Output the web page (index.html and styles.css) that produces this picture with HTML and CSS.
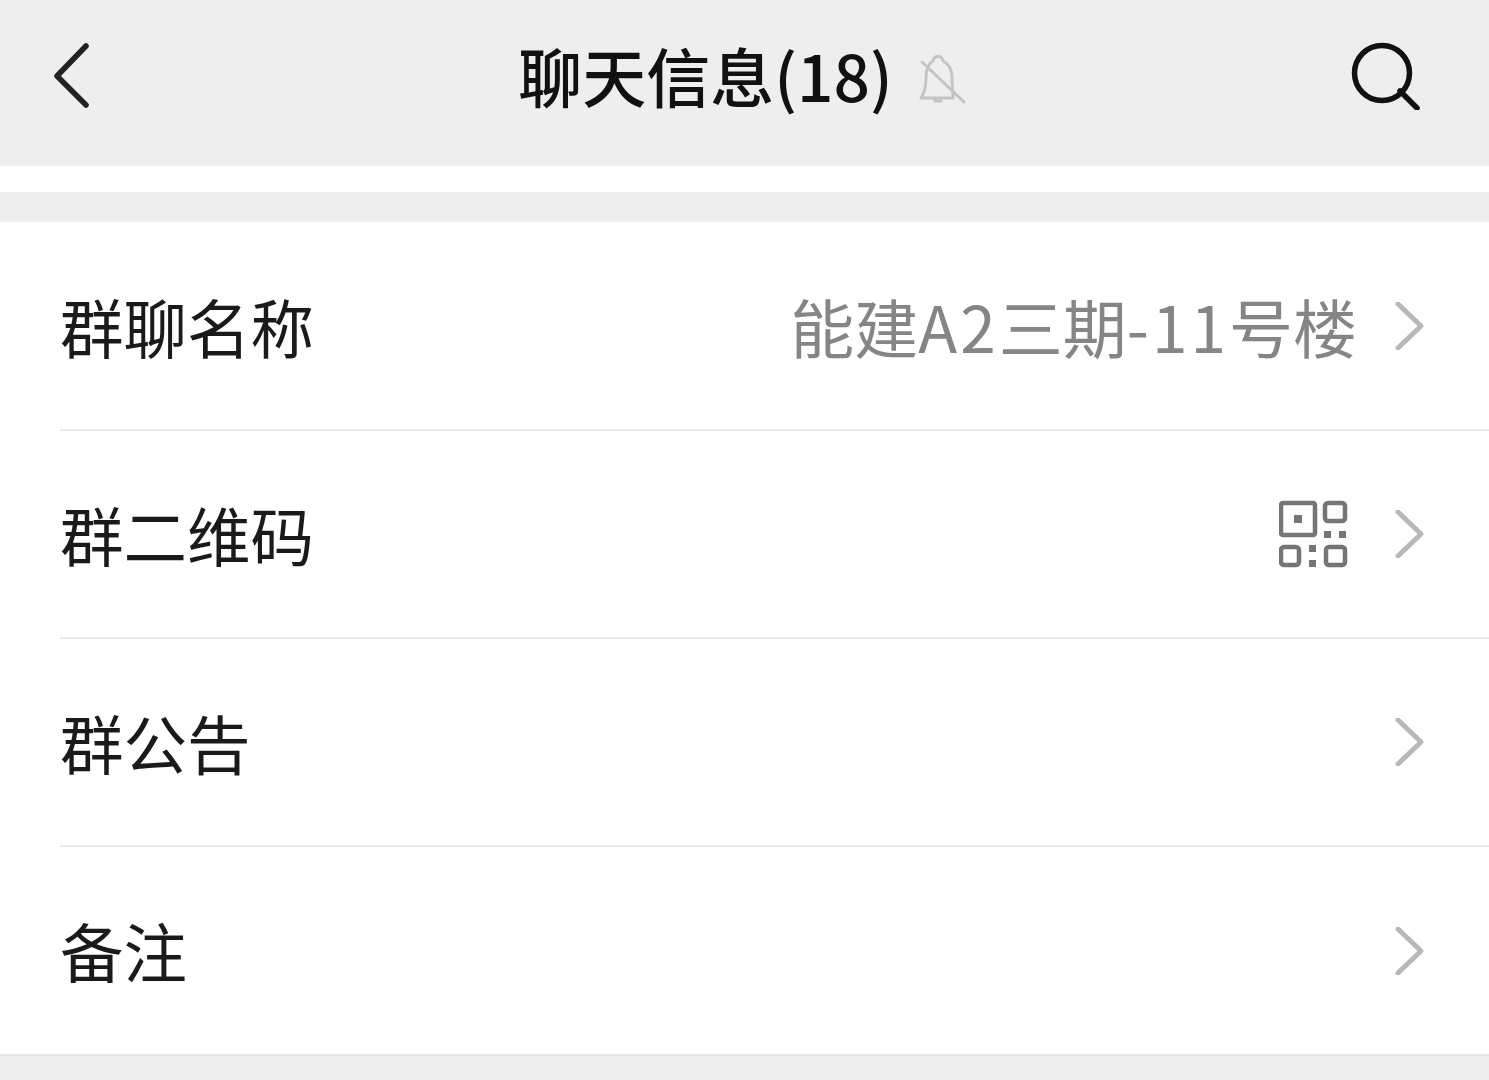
FILE: index.html
```html
<!DOCTYPE html>
<html lang="zh-CN">
<head>
  <meta charset="UTF-8">
  <meta name="viewport" content="width=device-width, initial-scale=1.0">
  <title>聊天信息</title>
  <link rel="stylesheet" href="styles.css">
</head>
<body>
  <header class="topbar">
    <svg class="back-icon" width="40" height="66" viewBox="0 0 40 66">
      <path d="M34 4 L5 34 L34 63" />
    </svg>
    <div class="topbar-title">
      <h1>聊天信息(18)</h1>
      <svg class="mute-icon" width="48" height="52" viewBox="0 0 48 52">
        <path d="M14 7 C15 1 23 1 24 7 C30 10 33 15 33 24 L34 44 L2 44 C6 38 7 32 7 24 C7 15 9 10 14 7 Z" />
        <path d="M16 44 L16 47 L22 47 L22 44" />
        <path d="M3 8 L45 48" />
      </svg>
    </div>
    <svg class="search-icon" width="70" height="70" viewBox="0 0 70 70">
      <circle cx="31" cy="33" r="27.5" />
      <path d="M49 51 L66 68" />
    </svg>
  </header>

  <div class="white-strip"></div>
  <div class="grey-strip"></div>

  <section class="list">
    <div class="row">
      <span class="row-label">群聊名称</span>
      <span class="row-value">能建<span class="latin">A2</span>三期<span class="latin">-11</span>号楼</span>
      <svg class="chevron" width="30" height="48" viewBox="0 0 30 48"><path d="M3 2 L26 24 L3 46" /></svg>
    </div>
    <div class="row">
      <span class="row-label">群二维码</span>
      <svg class="qr-icon" width="70" height="70" viewBox="0 0 70 70">
        <rect class="qr-box" x="2" y="4" width="34" height="32" rx="2" />
        <rect class="qr-dot" x="15" y="16" width="8" height="8" />
        <rect class="qr-box" x="46" y="4" width="20" height="18" rx="3" />
        <rect class="qr-box" x="2" y="48" width="18" height="18" rx="3" />
        <rect class="qr-box" x="47" y="48" width="19" height="18" rx="3" />
        <rect class="qr-dot" x="45" y="32" width="7" height="7" />
        <rect class="qr-dot" x="60" y="32" width="7" height="7" />
        <rect class="qr-dot" x="30" y="46" width="7" height="7" />
        <rect class="qr-dot" x="30" y="61" width="7" height="7" />
      </svg>
      <svg class="chevron" width="30" height="48" viewBox="0 0 30 48"><path d="M3 2 L26 24 L3 46" /></svg>
    </div>
    <div class="row">
      <span class="row-label">群公告</span>
      <svg class="chevron" width="30" height="48" viewBox="0 0 30 48"><path d="M3 2 L26 24 L3 46" /></svg>
    </div>
    <div class="row">
      <span class="row-label">备注</span>
      <svg class="chevron" width="30" height="48" viewBox="0 0 30 48"><path d="M3 2 L26 24 L3 46" /></svg>
    </div>
  </section>

  <div class="bottom-strip"></div>
</body>
</html>
```

FILE: styles.css
```css
html, body {
  margin: 0;
  padding: 0;
}
body {
  font-family: "Noto Sans CJK SC", "Noto Sans", sans-serif;
  background-color: #fff;
  color: #1a1a1a;
  height: 1080px;
  overflow: hidden;
}
svg {
  display: block;
  flex-shrink: 0;
  fill: none;
}
.topbar {
  height: 166px;
  box-sizing: border-box;
  padding: 0 68px 16px 52px;
  background-color: #eeeeee;
  display: flex;
  align-items: center;
  justify-content: space-between;
}
.topbar-title {
  display: flex;
  align-items: center;
  gap: 26px;
  margin-left: 42px;
}
.topbar-title h1 {
  margin: 0 0 2px;
  font-size: 64px;
  font-weight: 500;
  line-height: 90px;
  color: #111;
}
.back-icon path {
  stroke: #222;
  stroke-width: 5.5;
  stroke-linecap: round;
  stroke-linejoin: round;
}
.mute-icon {
  margin-top: 10px;
}
.mute-icon path {
  stroke: #c4c4c4;
  stroke-width: 3;
  stroke-linecap: round;
  stroke-linejoin: round;
}
.search-icon circle, .search-icon path {
  stroke: #111;
  stroke-width: 5.5;
  stroke-linecap: round;
}
.white-strip {
  height: 26px;
}
.grey-strip {
  height: 30px;
  background-color: #eeeeee;
}
.list {
  padding: 1px 0 0 60px;
}
.row {
  height: 208px;
  box-sizing: border-box;
  padding-right: 64px;
  border-bottom: 2px solid #e9e9e9;
  display: flex;
  align-items: center;
}
.row:last-child {
  height: 207px;
  border-bottom: none;
}
.row-label {
  font-size: 63.5px;
  line-height: 90px;
  color: #1a1a1a;
  margin-right: auto;
  padding-bottom: 3px;
}
.row-value {
  font-size: 64px;
  line-height: 90px;
  color: #858585;
  margin-right: 38px;
  padding-bottom: 3px;
}
.latin {
  letter-spacing: 3px;
}
.chevron path {
  stroke: #b8b8b8;
  stroke-width: 5;
  stroke-linecap: round;
  stroke-linejoin: round;
}
.qr-icon {
  margin-right: 46px;
}
.qr-box {
  stroke: #757575;
  stroke-width: 4.5;
}
.qr-dot {
  fill: #757575;
}
.bottom-strip {
  height: 27px;
  background-color: #eeeeee;
  border-top: 2px solid #e6e6e6;
}
```
